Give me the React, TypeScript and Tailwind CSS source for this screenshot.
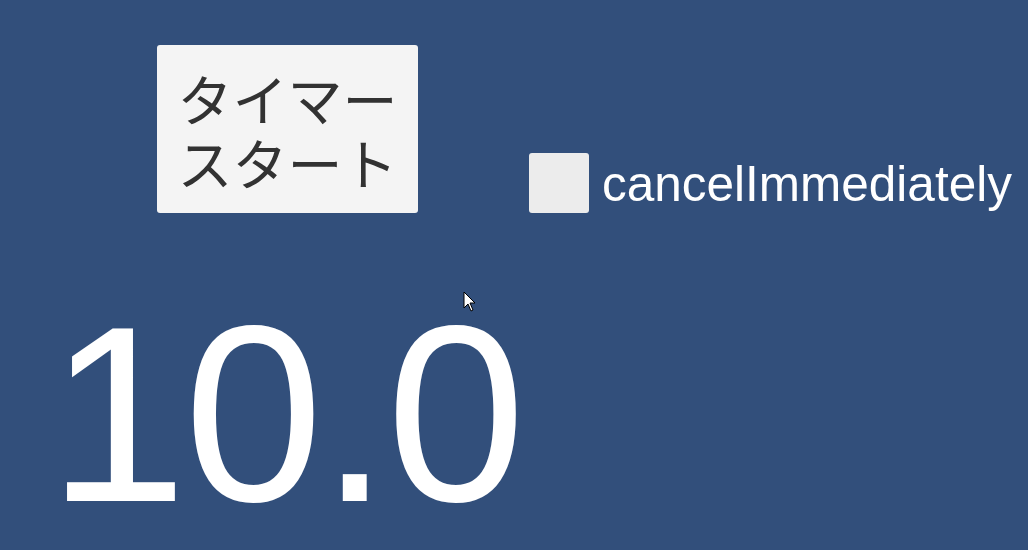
export default function App() {
    // タイマー画面
    return (
        <div className="relative w-[1028px] h-[550px] overflow-hidden bg-[#324f7b] font-['Liberation_Sans',Arial,sans-serif]">
            <div className="flex items-end pl-[157px] pt-[45px]">
                <button className="w-[261px] h-[168px] rounded-[3px] bg-[#f4f4f4] text-[#323232] text-[55px] leading-[64px] font-['Noto_Sans_CJK_JP',sans-serif] flex items-center justify-center text-center">
                    タイマースタート
                </button>
                <div className="flex items-end ml-[111px]">
                    <div className="w-[60px] h-[60px] rounded-[3px] bg-[#ececec]" />
                    <span className="ml-[13px] text-white text-[49.5px] leading-[60px] relative top-[1px]">cancelImmediately</span>
                </div>
            </div>
            <div className="mt-[77px] pl-[48px] text-white text-[250px] leading-[250px] tracking-[-3px]">10.0</div>
            <svg className="absolute left-[463px] top-[291px]" width="14" height="22" viewBox="0 0 14 22">
                <path d="M1 1 L1 17 L5 13 L8 20 L10 19 L7 12 L12 12 Z" fill="#fff" stroke="#000" strokeWidth="1" />
            </svg>
        </div>
    )
}
